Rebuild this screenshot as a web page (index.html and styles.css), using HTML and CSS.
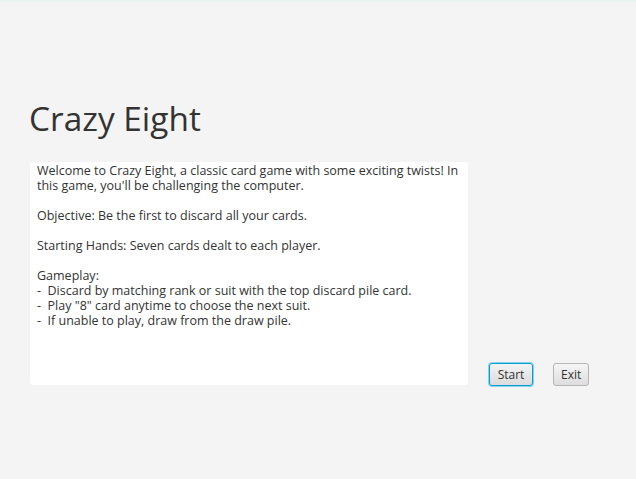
FILE: index.html
```html
<!DOCTYPE html>
<html>
<head>
<meta charset="utf-8">
<link rel="stylesheet" href="styles.css">
</head>
<body>
<div class="topline"></div>
<main class="page">
  <h1 class="title">Crazy Eight</h1>
  <div class="row">
    <div class="textarea">
      <p>Welcome to Crazy Eight, a classic card game with some exciting twists! In this game, you'll be challenging the computer.</p>
      <p>Objective: Be the first to discard all your cards.</p>
      <p>Starting Hands: Seven cards dealt to each player.</p>
      <p>Gameplay:<br>-&nbsp; Discard by matching rank or suit with the top discard pile card.<br>-&nbsp; Play "8" card anytime to choose the next suit.<br>-&nbsp; If unable to play, draw from the draw pile.</p>
    </div>
    <div class="buttons">
      <button class="btn btn-default">Start</button>
      <button class="btn">Exit</button>
    </div>
  </div>
</main>
</body>
</html>
```
FILE: styles.css
```css
html, body {
  margin: 0;
  padding: 0;
  background: #f4f4f4;
  height: 100%;
}
body {
  font-family: "Open Sans", "Noto Sans", sans-serif;
  color: #333;
}
.topline {
  height: 2px;
  background: #eaf2f2;
}
.page {
  padding: 0 0 0 30px;
}
.title {
  margin: 93px 0 0 -1px;
  font-weight: 400;
  font-size: 33.4px;
  line-height: 46px;
  color: #333;
  height: 67px;
}
.row {
  display: flex;
  align-items: flex-end;
}
.textarea {
  box-sizing: border-box;
  width: 438px;
  height: 223px;
  background: #fff;
  border-radius: 3px;
  padding: 1px 7px;
  font-size: 12.5px;
  line-height: 15px;
  color: #333;
}
.textarea p {
  margin: 0 0 15px 0;
}
.buttons {
  display: flex;
  gap: 20px;
  margin-left: 21px;
  position: relative;
  top: 1px;
}
.btn {
  box-sizing: border-box;
  height: 23px;
  padding: 0 7px;
  font-family: "Open Sans", "Noto Sans", sans-serif;
  font-size: 12px;
  color: #333;
  border: 1px solid #b5b5b5;
  border-radius: 3px;
  background: linear-gradient(#f6f6f6, #dedede);
}
.btn-default {
  width: 44px;
  border-color: #039ed3;
  box-shadow: 0 0 0 1px #8fd0ec;
  background: linear-gradient(#f3f3f3, #dcdcdc);
}
```
